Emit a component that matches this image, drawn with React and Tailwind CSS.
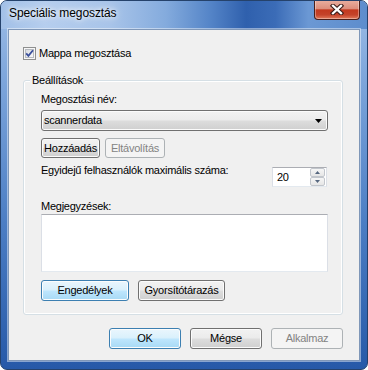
import React from "react";

function Btn({ children, className = "", variant = "normal" }) {
  const base =
    "flex items-center justify-center rounded-[3px] border leading-[13px] shrink-0";
  let look = "";
  if (variant === "normal")
    look =
      "border-[#707070] bg-[linear-gradient(180deg,#f2f2f2_0%,#ebebeb_48%,#dddddd_52%,#cfcfcf_100%)] shadow-[inset_0_0_0_1px_#fbfbfb] text-black";
  if (variant === "blue")
    look =
      "border-[#3c7fb1] bg-[linear-gradient(180deg,#eaf6fd_0%,#d9f0fc_48%,#bee6fd_52%,#a7d9f5_100%)] shadow-[inset_0_0_0_1px_#fcfcfc] text-black";
  if (variant === "disabled")
    look = "border-[#adb2b5] bg-[#f4f4f4] text-[#838383]";
  return <div className={`${base} ${look} ${className}`}>{children}</div>;
}

function CheckBox() {
  return (
    <svg width="13" height="13" viewBox="0 0 13 13" className="shrink-0">
      <defs>
        <linearGradient id="cbin" x1="0" y1="0" x2="1" y2="1">
          <stop offset="0" stopColor="#d6d9de" />
          <stop offset="1" stopColor="#fbfbfb" />
        </linearGradient>
      </defs>
      <rect x="0.5" y="0.5" width="12" height="12" fill="#f6f6f6" stroke="#8e8f8f" />
      <rect x="2.5" y="2.5" width="8" height="8" fill="url(#cbin)" stroke="#b6bac0" />
      <path d="M3.2 6.4 L5.4 8.9 L10 3.2" fill="none" stroke="#3a4f9c" strokeWidth="1.8" />
    </svg>
  );
}

function CloseX() {
  return (
    <svg width="14" height="11" viewBox="0 0 14 11">
      <path
        d="M3 1.8 L11 9.2 M11 1.8 L3 9.2"
        stroke="#3b1c18"
        strokeWidth="4.4"
        strokeLinecap="square"
        fill="none"
      />
      <path
        d="M3 1.8 L11 9.2 M11 1.8 L3 9.2"
        stroke="#ffffff"
        strokeWidth="2.3"
        strokeLinecap="square"
        fill="none"
      />
    </svg>
  );
}

export default function App() {
  return (
    <div className="w-[368px] h-[370px] font-['Liberation_Sans',sans-serif] text-[11px] tracking-[-0.25px] text-black">
      <div className="w-full h-full rounded-[7px] border border-[#25426b] bg-[linear-gradient(180deg,#9ebde6_0%,#7fa7dc_20%,#4c7ec4_60%,#2659a8_100%)] flex flex-col overflow-hidden">
        {/* title bar */}
        <div className="h-[28px] shrink-0 flex items-start bg-[linear-gradient(90deg,#a2c0e7_0%,#b6ceee_12%,#a8c4e9_30%,#84abdd_45%,#5585c8_57%,#2f60ad_67%,#3b6cb7_75%,#6b98d4_84%,#5d8dcd_100%)]">
          <span className="mt-[5px] ml-[8px] text-[12px] leading-[15px] tracking-[-0.1px] [text-shadow:0_0_8px_#ffffff,0_0_4px_#ffffff]">
            Speciális megosztás
          </span>
          <div className="ml-auto mr-[7px] -mt-[1px] w-[46px] h-[20px] rounded-b-[4px] border border-[#4a1f1a] border-t-0 bg-[linear-gradient(180deg,#eab0a1_0%,#dc8e7c_46%,#c3391f_52%,#c4432a_78%,#e27b5c_100%)] shadow-[inset_0_0_0_1px_rgba(255,255,255,0.35)] flex items-center justify-center">
            <CloseX />
          </div>
        </div>

        {/* client area */}
        <div className="ml-[7px] mr-[7px] h-[332px] shrink-0 border border-[#7f97b8] bg-[#f0f0f0] shadow-[0_0_0_1px_rgba(255,255,255,0.45)] flex flex-col">
          {/* checkbox row */}
          <div className="mt-[17px] ml-[14px] h-[13px] flex items-center gap-[3px]">
            <CheckBox />
            <span className="leading-[13px]">Mappa megosztása</span>
          </div>

          {/* group box */}
          <div className="relative mt-[20px] ml-[14px] w-[320px] rounded-[3px] border border-[#d5dfe5] shadow-[inset_0_0_0_1px_#ffffff] pl-[17px] pr-[14px] pb-[13px] flex flex-col">
            <span className="absolute left-[6px] -top-[7px] px-[2px] bg-[#f0f0f0] leading-[13px]">
              Beállítások
            </span>

            <div className="mt-[12px] leading-[13px] h-[13px]">Megosztási név:</div>

            <div className="mt-[4px] h-[21px] rounded-[3px] border border-[#707070] bg-[linear-gradient(180deg,#f2f2f2_0%,#ebebeb_48%,#dddddd_52%,#cfcfcf_100%)] shadow-[inset_0_0_0_1px_#fbfbfb] flex items-center pl-[2px] pr-[5px]">
              <span className="leading-[13px]">scannerdata</span>
              <svg width="7" height="4" viewBox="0 0 7 4" className="ml-auto">
                <polygon points="0,0 7,0 3.5,4" fill="#000000" />
              </svg>
            </div>

            <div className="mt-[7px] flex gap-[5px]">
              <Btn className="w-[59px] h-[20px]">Hozzáadás</Btn>
              <Btn className="w-[60px] h-[20px]" variant="disabled">
                Eltávolítás
              </Btn>
            </div>

            <div className="mt-[6px] flex items-start">
              <span className="leading-[13px]">Egyidejű felhasználók maximális száma:</span>
              <div className="ml-auto mr-[1px] mt-[3px] w-[55px] h-[20px] border border-[#abadb3] border-l-[#dbdfe6] border-r-[#dbdfe6] border-b-[#e3e9ef] bg-white flex items-center">
                <span className="ml-[4px] leading-[13px]">20</span>
                <div className="ml-auto mr-[1px] w-[15px] h-[18px] flex flex-col">
                  <div className="h-[9px] rounded-[2px] border border-[#c2c6cc] bg-[linear-gradient(180deg,#f6f6f6_0%,#e6e6e6_100%)] flex items-center justify-center">
                    <svg width="5" height="3" viewBox="0 0 5 3">
                      <polygon points="0,3 5,3 2.5,0" fill="#56677f" />
                    </svg>
                  </div>
                  <div className="h-[9px] rounded-[2px] border border-[#c2c6cc] bg-[linear-gradient(180deg,#f6f6f6_0%,#e6e6e6_100%)] flex items-center justify-center">
                    <svg width="5" height="3" viewBox="0 0 5 3">
                      <polygon points="0,0 5,0 2.5,3" fill="#56677f" />
                    </svg>
                  </div>
                </div>
              </div>
            </div>

            <div className="mt-[13px] leading-[13px] h-[13px]">Megjegyzések:</div>

            <div className="mt-[1px] h-[58px] border border-[#abadb3] border-l-[#dbdfe6] border-r-[#dbdfe6] border-b-[#e3e9ef] bg-white" />

            <div className="mt-[8px] flex gap-[9px]">
              <Btn className="w-[88px] h-[21px]" variant="blue">
                Engedélyek
              </Btn>
              <Btn className="w-[87px] h-[21px]">Gyorsítótárazás</Btn>
            </div>
          </div>

          {/* dialog buttons */}
          <div className="mt-[13px] mr-[16px] flex justify-end gap-[9px]">
            <Btn className="w-[72px] h-[21px]" variant="blue">
              OK
            </Btn>
            <Btn className="w-[72px] h-[21px]">Mégse</Btn>
            <Btn className="w-[72px] h-[21px]" variant="disabled">
              Alkalmaz
            </Btn>
          </div>
        </div>
      </div>
    </div>
  );
}
